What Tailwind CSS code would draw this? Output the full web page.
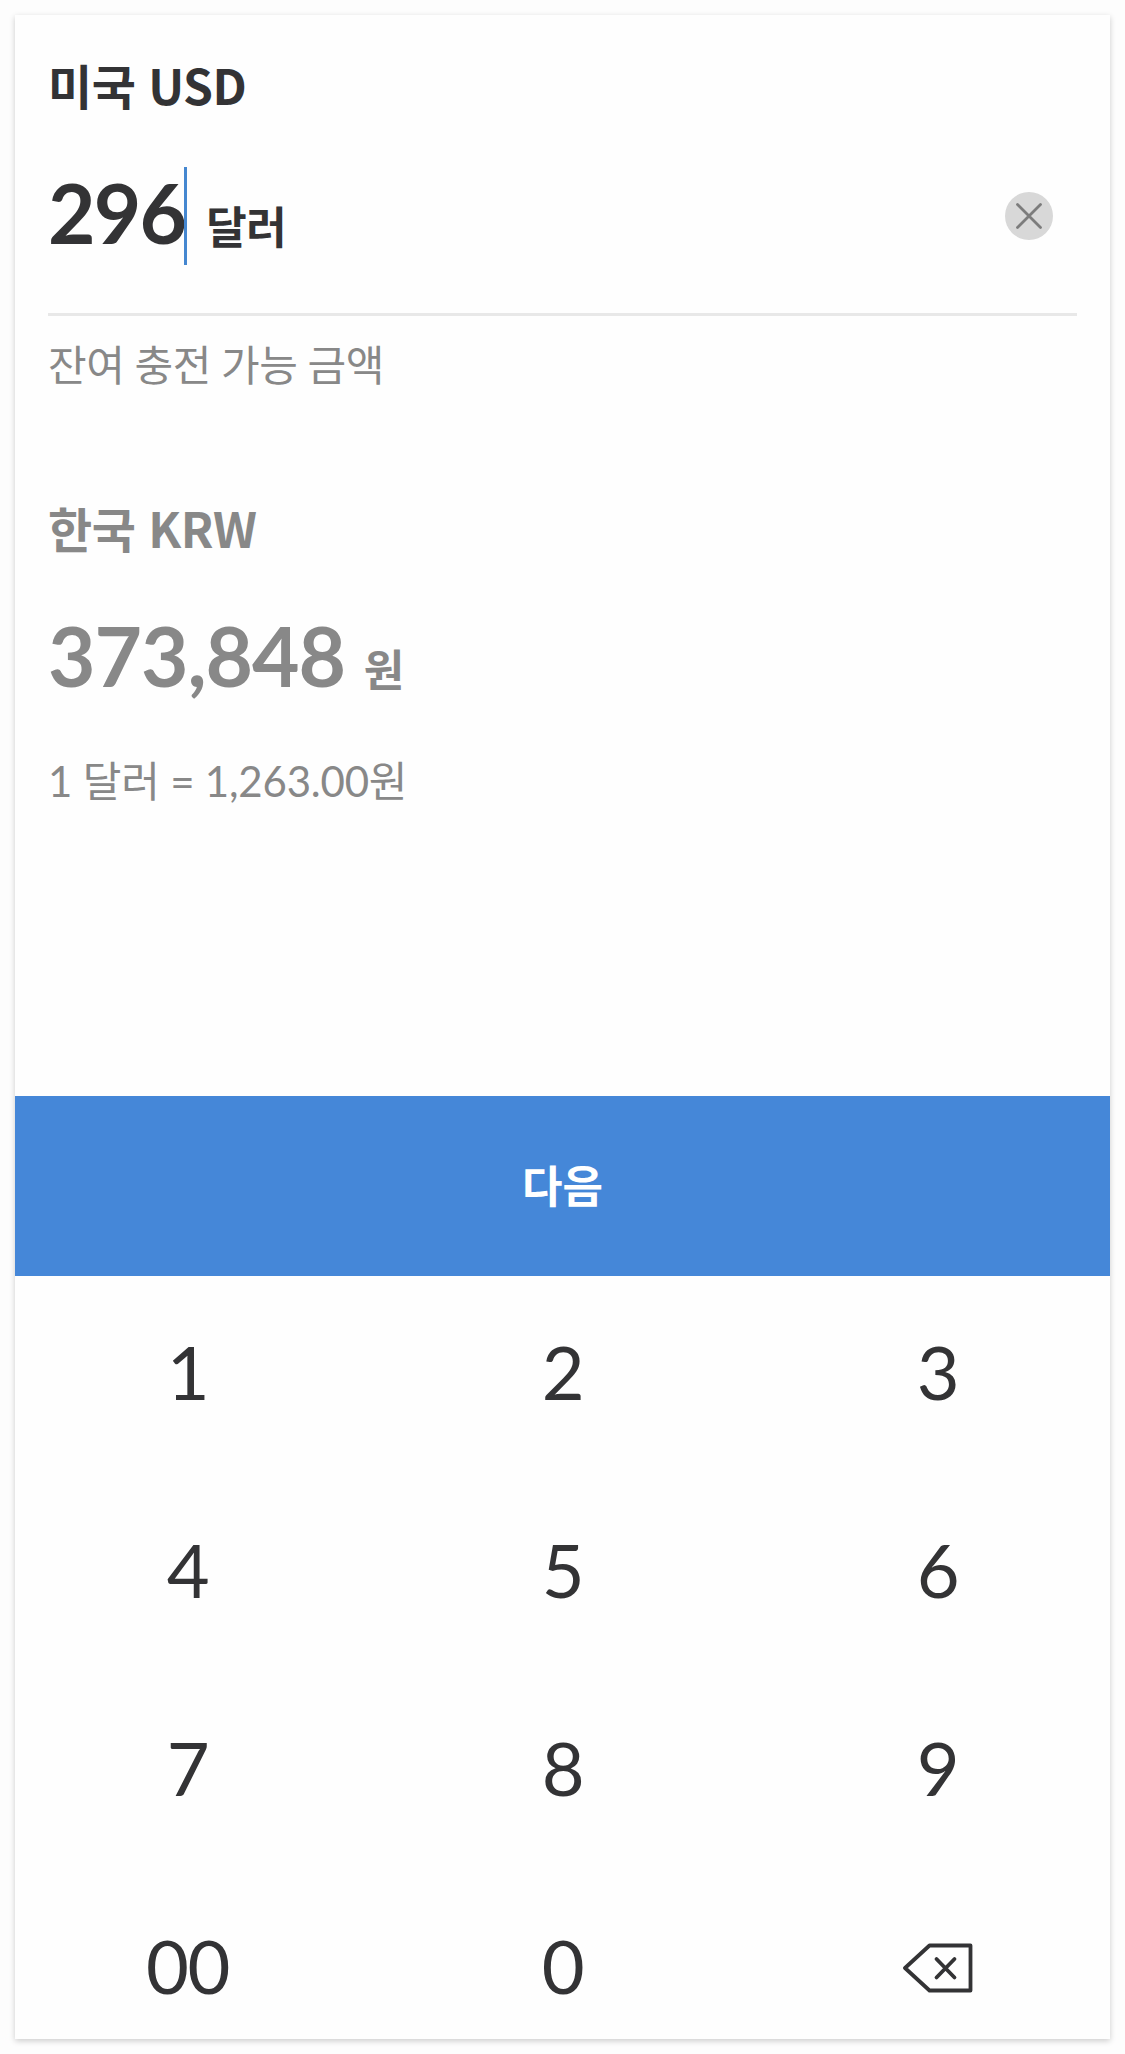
<!DOCTYPE html>
<html lang="ko">

<head>
  <meta charset="utf-8">
  <title>환전 충전</title>
  <script src="https://cdn.jsdelivr.net/npm/@tailwindcss/browser@4"></script>
</head>

<body class="bg-[#fdfdfd] p-[15px] font-['Lato','Noto_Sans_CJK_KR',sans-serif]">
  <div class="h-[2024px] bg-[#fefefe] shadow-[0_2px_6px_rgba(0,0,0,0.2)]">
    <!-- Amounts -->
    <div class="h-[1081px] px-[33px] pt-[37px] text-[#333335]">
      <h1 class="text-[48px] leading-[64px] font-bold font-['Noto_Sans_CJK_KR',sans-serif] tracking-[-0.5px]">미국 USD</h1>
      <div class="mt-[46px] h-[154px] border-b-3 border-[#e8e8e8] flex justify-between">
        <div class="flex items-baseline font-bold">
          <span class="text-[82px] leading-[100px] tracking-[-1.8px]">296</span>
          <span class="mt-[5px] -ml-px w-[3px] h-[98px] self-start bg-[#4587d0]"></span>
          <span class="ml-[19px] text-[44px] leading-[60px] tracking-[-0.6px]">달러</span>
        </div>
        <button class="mt-[30px] mr-[24px] size-[48px]">
          <svg viewBox="0 0 48 48" fill="none" stroke="#7c7c7c" stroke-width="2.8" stroke-linecap="round">
            <circle cx="24" cy="24" r="24" fill="#d8d8d8" stroke="none" />
            <path d="M12.5 12.5L35.5 35.5M35.5 12.5L12.5 35.5" />
          </svg>
        </button>
      </div>
      <div class="text-[#888]">
        <p class="mt-[19px] text-[42px] leading-[60px] tracking-[-0.5px]">잔여 충전 가능 금액</p>
        <h2 class="mt-[100px] text-[48px] leading-[64px] font-bold font-['Noto_Sans_CJK_KR',sans-serif] tracking-[-0.5px]">한국 KRW</h2>
        <div class="mt-[46px] flex items-baseline font-bold">
          <span class="text-[82px] leading-[100px] tracking-[-1.1px]">373,848</span>
          <span class="ml-[19px] text-[44px] leading-[60px]">원</span>
        </div>
        <p class="mt-[46px] text-[42px] leading-[60px] tracking-[-0.2px]">1 달러 = 1,263.00원</p>
      </div>
    </div>
    <button class="w-full h-[180px] bg-[#4587d8] text-white text-[44px] font-bold">다음</button>
    <!-- Keypad -->
    <div class="-mx-[15px] grid grid-cols-3 grid-rows-[198px_198px_198px_165px] text-[74px] text-[#333335] text-center leading-[192px] tracking-[-1.5px]">
      <span>1</span><span>2</span><span>3</span>
      <span>4</span><span>5</span><span>6</span>
      <span>7</span><span>8</span><span>9</span>
      <span>00</span><span>0</span>
      <button class="mt-[73px] w-[70px] h-[50px] justify-self-center">
        <svg viewBox="0 0 70 50" fill="none" stroke="#333335" stroke-width="3.8" stroke-linecap="round" stroke-linejoin="round">
          <path d="M26.5 2.5H67.5V47.5H26.5L2 25Z" />
          <path d="M33.5 16L51.5 34.5M51.5 16L33.5 34.5" />
        </svg>
      </button>
    </div>
  </div>
</body>

</html>
